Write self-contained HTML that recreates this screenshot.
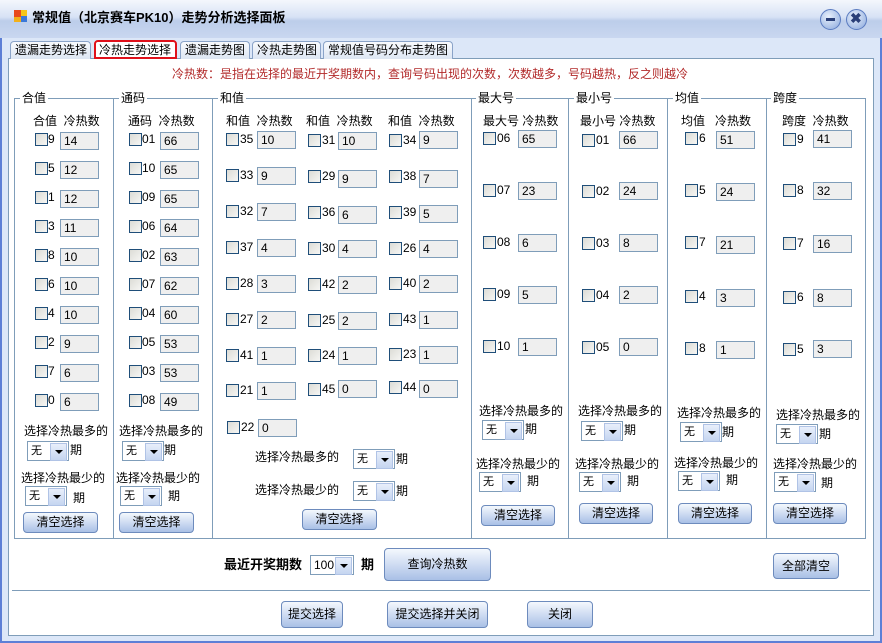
<!DOCTYPE html>
<html><head><meta charset="utf-8"><style>
*{margin:0;padding:0;box-sizing:border-box}
body{width:882px;height:643px;overflow:hidden;background:#dbe6f7;font-family:"Liberation Sans","Noto Sans CJK SC","WenQuanYi Zen Hei",sans-serif;font-size:12px;color:#000;position:relative}
.a{position:absolute;white-space:nowrap;line-height:14px}
.win{position:absolute;left:0;top:0;width:882px;height:643px;border:2px solid #5d7fd6;border-top:none;background:#dce7f8}
.title{position:absolute;left:0;top:0;width:882px;height:38px;background:linear-gradient(#f4f7fc,#d7e2f5 45%,#bccdea 55%,#c9d7f0)}
.panel{position:absolute;left:8px;top:58px;width:866px;height:578px;background:#fff;border:1px solid #7f9db9}
.tab{position:absolute;top:41px;height:18px;border:1px solid #8aa3c8;border-bottom:none;border-radius:4px 4px 0 0;background:linear-gradient(#f8fafd,#dde6f3);font-size:12px;line-height:16px;padding-left:4px;white-space:nowrap;overflow:hidden}
.cb{position:absolute;width:13px;height:13px;border:1px solid #1f4e79;background:linear-gradient(135deg,#dcdcd6,#f6f6f4)}
.in{position:absolute;width:39px;height:18px;border:1px solid #7f9db9;background:#efefef;padding-left:3px;line-height:16px}
.g{position:absolute;top:98px;height:441px;border:1px solid #7f9db9}
.gl{position:absolute;top:91px;background:#fff;padding:0 2px;font-size:12px;line-height:14px}
.sel{position:absolute;width:42px;height:20px;border:1px solid #7f9db9;background:#fff;font-size:11px;line-height:18px;padding-left:3px}
.sel::after{content:"";position:absolute;right:1px;top:1px;width:15px;height:16px;background:linear-gradient(#e8effb,#c5d5f0);border:1px solid #b0c3e6}
.sel::before{content:"";position:absolute;right:5px;top:8px;border:4px solid transparent;border-top:4px solid #000;border-bottom:none;z-index:1}
.btn{position:absolute;height:21px;border:1px solid #6d8bbd;border-radius:4px;background:linear-gradient(#f4f8fd,#cfdcf2 50%,#a9c0e6);text-align:center;font-size:12px;line-height:19px;white-space:nowrap}
</style></head><body>
<div class="win"></div>
<div class="title"></div>
<div class="a" style="left:14px;top:10px;width:7px;height:7px;background:#e84a1c"></div>
<div class="a" style="left:21px;top:10px;width:6px;height:6px;background:#f5c518"></div>
<div class="a" style="left:14px;top:17px;width:7px;height:5px;background:#f2b01a"></div>
<div class="a" style="left:21px;top:16px;width:6px;height:6px;background:#3a78d8"></div>
<div class="a" style="left:32px;top:11px;font-size:13px;font-weight:bold">常规值（北京赛车PK10）走势分析选择面板</div>
<div class="a" style="left:820px;top:9px;width:21px;height:21px;border-radius:50%;background:radial-gradient(circle at 40% 35%,#e8f0fc,#8aa8dc);border:1px solid #5a7bc0"></div>
<div class="a" style="left:826px;top:18px;width:9px;height:3px;background:#2a3f78"></div>
<div class="a" style="left:846px;top:9px;width:21px;height:21px;border-radius:50%;background:radial-gradient(circle at 40% 35%,#e8f0fc,#8aa8dc);border:1px solid #5a7bc0"></div>
<div class="a" style="left:850px;top:11px;font-size:14px;font-weight:bold;color:#2a3f78">✖</div>

<div class="panel"></div>
<div class="tab" style="left:10px;width:81px">遗漏走势选择</div>
<div class="tab" style="left:94px;width:83px;border:2px solid #e0101a;background:#fff;top:40px;height:19px;padding-left:3px">冷热走势选择</div>
<div class="tab" style="left:180px;width:70px">遗漏走势图</div>
<div class="tab" style="left:252px;width:69px">冷热走势图</div>
<div class="tab" style="left:323px;width:130px">常规值号码分布走势图</div>

<div class="a" style="left:172px;top:67px;color:#b22a2a">冷热数：是指在选择的最近开奖期数内，查询号码出现的次数，次数越多，号码越热，反之则越冷</div>

<div class="g" style="left:14px;width:100px"></div>
<div class="g" style="left:113px;width:100px"></div>
<div class="g" style="left:212px;width:260px"></div>
<div class="g" style="left:471px;width:98px"></div>
<div class="g" style="left:568px;width:100px"></div>
<div class="g" style="left:667px;width:100px"></div>
<div class="g" style="left:766px;width:100px"></div>
<div class="gl" style="left:20px">合值</div>
<div class="gl" style="left:119px">通码</div>
<div class="gl" style="left:218px">和值</div>
<div class="gl" style="left:476px">最大号</div>
<div class="gl" style="left:574px">最小号</div>
<div class="gl" style="left:673px">均值</div>
<div class="gl" style="left:771px">跨度</div>

<!-- headers -->
<div class="a" style="left:33px;top:114px">合值&nbsp; 冷热数</div>
<div class="a" style="left:128px;top:114px">通码&nbsp; 冷热数</div>
<div class="a" style="left:226px;top:114px">和值&nbsp; 冷热数</div>
<div class="a" style="left:306px;top:114px">和值&nbsp; 冷热数</div>
<div class="a" style="left:388px;top:114px">和值&nbsp; 冷热数</div>
<div class="a" style="left:483px;top:114px">最大号 冷热数</div>
<div class="a" style="left:580px;top:114px">最小号 冷热数</div>
<div class="a" style="left:681px;top:114px">均值&nbsp;&nbsp; 冷热数</div>
<div class="a" style="left:782px;top:114px">跨度&nbsp; 冷热数</div>

<!-- 合值 -->
<div class="cb" style="left:35px;top:133px"></div><div class="a" style="left:48px;top:132px">9</div><div class="in" style="left:60px;top:132px">14</div>
<div class="cb" style="left:35px;top:162px"></div><div class="a" style="left:48px;top:161px">5</div><div class="in" style="left:60px;top:161px">12</div>
<div class="cb" style="left:35px;top:191px"></div><div class="a" style="left:48px;top:190px">1</div><div class="in" style="left:60px;top:190px">12</div>
<div class="cb" style="left:35px;top:220px"></div><div class="a" style="left:48px;top:219px">3</div><div class="in" style="left:60px;top:219px">11</div>
<div class="cb" style="left:35px;top:249px"></div><div class="a" style="left:48px;top:248px">8</div><div class="in" style="left:60px;top:248px">10</div>
<div class="cb" style="left:35px;top:278px"></div><div class="a" style="left:48px;top:277px">6</div><div class="in" style="left:60px;top:277px">10</div>
<div class="cb" style="left:35px;top:307px"></div><div class="a" style="left:48px;top:306px">4</div><div class="in" style="left:60px;top:306px">10</div>
<div class="cb" style="left:35px;top:336px"></div><div class="a" style="left:48px;top:335px">2</div><div class="in" style="left:60px;top:335px">9</div>
<div class="cb" style="left:35px;top:365px"></div><div class="a" style="left:48px;top:364px">7</div><div class="in" style="left:60px;top:364px">6</div>
<div class="cb" style="left:35px;top:394px"></div><div class="a" style="left:48px;top:393px">0</div><div class="in" style="left:60px;top:393px">6</div>
<!-- 通码 -->
<div class="cb" style="left:129px;top:133px"></div><div class="a" style="left:142px;top:132px">01</div><div class="in" style="left:160px;top:132px">66</div>
<div class="cb" style="left:129px;top:162px"></div><div class="a" style="left:142px;top:161px">10</div><div class="in" style="left:160px;top:161px">65</div>
<div class="cb" style="left:129px;top:191px"></div><div class="a" style="left:142px;top:190px">09</div><div class="in" style="left:160px;top:190px">65</div>
<div class="cb" style="left:129px;top:220px"></div><div class="a" style="left:142px;top:219px">06</div><div class="in" style="left:160px;top:219px">64</div>
<div class="cb" style="left:129px;top:249px"></div><div class="a" style="left:142px;top:248px">02</div><div class="in" style="left:160px;top:248px">63</div>
<div class="cb" style="left:129px;top:278px"></div><div class="a" style="left:142px;top:277px">07</div><div class="in" style="left:160px;top:277px">62</div>
<div class="cb" style="left:129px;top:307px"></div><div class="a" style="left:142px;top:306px">04</div><div class="in" style="left:160px;top:306px">60</div>
<div class="cb" style="left:129px;top:336px"></div><div class="a" style="left:142px;top:335px">05</div><div class="in" style="left:160px;top:335px">53</div>
<div class="cb" style="left:129px;top:365px"></div><div class="a" style="left:142px;top:364px">03</div><div class="in" style="left:160px;top:364px">53</div>
<div class="cb" style="left:129px;top:394px"></div><div class="a" style="left:142px;top:393px">08</div><div class="in" style="left:160px;top:393px">49</div>
<!-- 和值 col1 -->
<div class="cb" style="left:226px;top:133px"></div><div class="a" style="left:240px;top:132px">35</div><div class="in" style="left:257px;top:131px">10</div>
<div class="cb" style="left:226px;top:169px"></div><div class="a" style="left:240px;top:168px">33</div><div class="in" style="left:257px;top:167px">9</div>
<div class="cb" style="left:226px;top:205px"></div><div class="a" style="left:240px;top:204px">32</div><div class="in" style="left:257px;top:203px">7</div>
<div class="cb" style="left:226px;top:241px"></div><div class="a" style="left:240px;top:240px">37</div><div class="in" style="left:257px;top:239px">4</div>
<div class="cb" style="left:226px;top:277px"></div><div class="a" style="left:240px;top:276px">28</div><div class="in" style="left:257px;top:275px">3</div>
<div class="cb" style="left:226px;top:313px"></div><div class="a" style="left:240px;top:312px">27</div><div class="in" style="left:257px;top:311px">2</div>
<div class="cb" style="left:226px;top:349px"></div><div class="a" style="left:240px;top:348px">41</div><div class="in" style="left:257px;top:347px">1</div>
<div class="cb" style="left:226px;top:384px"></div><div class="a" style="left:240px;top:383px">21</div><div class="in" style="left:257px;top:382px">1</div>
<div class="cb" style="left:227px;top:421px"></div><div class="a" style="left:241px;top:420px">22</div><div class="in" style="left:258px;top:419px">0</div>
<!-- col2 -->
<div class="cb" style="left:308px;top:134px"></div><div class="a" style="left:322px;top:133px">31</div><div class="in" style="left:338px;top:132px">10</div>
<div class="cb" style="left:308px;top:170px"></div><div class="a" style="left:322px;top:169px">29</div><div class="in" style="left:338px;top:170px">9</div>
<div class="cb" style="left:308px;top:206px"></div><div class="a" style="left:322px;top:205px">36</div><div class="in" style="left:338px;top:206px">6</div>
<div class="cb" style="left:308px;top:242px"></div><div class="a" style="left:322px;top:241px">30</div><div class="in" style="left:338px;top:240px">4</div>
<div class="cb" style="left:308px;top:278px"></div><div class="a" style="left:322px;top:277px">42</div><div class="in" style="left:338px;top:276px">2</div>
<div class="cb" style="left:308px;top:314px"></div><div class="a" style="left:322px;top:313px">25</div><div class="in" style="left:338px;top:312px">2</div>
<div class="cb" style="left:308px;top:349px"></div><div class="a" style="left:322px;top:348px">24</div><div class="in" style="left:338px;top:347px">1</div>
<div class="cb" style="left:308px;top:383px"></div><div class="a" style="left:322px;top:382px">45</div><div class="in" style="left:338px;top:380px">0</div>
<!-- col3 -->
<div class="cb" style="left:389px;top:134px"></div><div class="a" style="left:403px;top:133px">34</div><div class="in" style="left:419px;top:131px">9</div>
<div class="cb" style="left:389px;top:170px"></div><div class="a" style="left:403px;top:169px">38</div><div class="in" style="left:419px;top:170px">7</div>
<div class="cb" style="left:389px;top:206px"></div><div class="a" style="left:403px;top:205px">39</div><div class="in" style="left:419px;top:205px">5</div>
<div class="cb" style="left:389px;top:242px"></div><div class="a" style="left:403px;top:241px">26</div><div class="in" style="left:419px;top:240px">4</div>
<div class="cb" style="left:389px;top:277px"></div><div class="a" style="left:403px;top:276px">40</div><div class="in" style="left:419px;top:275px">2</div>
<div class="cb" style="left:389px;top:313px"></div><div class="a" style="left:403px;top:312px">43</div><div class="in" style="left:419px;top:311px">1</div>
<div class="cb" style="left:389px;top:348px"></div><div class="a" style="left:403px;top:347px">23</div><div class="in" style="left:419px;top:346px">1</div>
<div class="cb" style="left:389px;top:381px"></div><div class="a" style="left:403px;top:380px">44</div><div class="in" style="left:419px;top:380px">0</div>
<!-- 最大号 -->
<div class="cb" style="left:483px;top:132px"></div><div class="a" style="left:497px;top:131px">06</div><div class="in" style="left:518px;top:130px">65</div>
<div class="cb" style="left:483px;top:184px"></div><div class="a" style="left:497px;top:183px">07</div><div class="in" style="left:518px;top:182px">23</div>
<div class="cb" style="left:483px;top:236px"></div><div class="a" style="left:497px;top:235px">08</div><div class="in" style="left:518px;top:234px">6</div>
<div class="cb" style="left:483px;top:288px"></div><div class="a" style="left:497px;top:287px">09</div><div class="in" style="left:518px;top:286px">5</div>
<div class="cb" style="left:483px;top:340px"></div><div class="a" style="left:497px;top:339px">10</div><div class="in" style="left:518px;top:338px">1</div>
<!-- 最小号 -->
<div class="cb" style="left:582px;top:134px"></div><div class="a" style="left:596px;top:133px">01</div><div class="in" style="left:619px;top:131px">66</div>
<div class="cb" style="left:582px;top:185px"></div><div class="a" style="left:596px;top:184px">02</div><div class="in" style="left:619px;top:182px">24</div>
<div class="cb" style="left:582px;top:237px"></div><div class="a" style="left:596px;top:236px">03</div><div class="in" style="left:619px;top:234px">8</div>
<div class="cb" style="left:582px;top:289px"></div><div class="a" style="left:596px;top:288px">04</div><div class="in" style="left:619px;top:286px">2</div>
<div class="cb" style="left:582px;top:341px"></div><div class="a" style="left:596px;top:340px">05</div><div class="in" style="left:619px;top:338px">0</div>
<!-- 均值 -->
<div class="cb" style="left:685px;top:132px"></div><div class="a" style="left:699px;top:131px">6</div><div class="in" style="left:716px;top:131px">51</div>
<div class="cb" style="left:685px;top:184px"></div><div class="a" style="left:699px;top:183px">5</div><div class="in" style="left:716px;top:183px">24</div>
<div class="cb" style="left:685px;top:236px"></div><div class="a" style="left:699px;top:235px">7</div><div class="in" style="left:716px;top:236px">21</div>
<div class="cb" style="left:685px;top:290px"></div><div class="a" style="left:699px;top:289px">4</div><div class="in" style="left:716px;top:289px">3</div>
<div class="cb" style="left:685px;top:342px"></div><div class="a" style="left:699px;top:341px">8</div><div class="in" style="left:716px;top:341px">1</div>
<!-- 跨度 -->
<div class="cb" style="left:783px;top:133px"></div><div class="a" style="left:797px;top:132px">9</div><div class="in" style="left:813px;top:130px">41</div>
<div class="cb" style="left:783px;top:184px"></div><div class="a" style="left:797px;top:183px">8</div><div class="in" style="left:813px;top:182px">32</div>
<div class="cb" style="left:783px;top:237px"></div><div class="a" style="left:797px;top:236px">7</div><div class="in" style="left:813px;top:235px">16</div>
<div class="cb" style="left:783px;top:291px"></div><div class="a" style="left:797px;top:290px">6</div><div class="in" style="left:813px;top:289px">8</div>
<div class="cb" style="left:783px;top:343px"></div><div class="a" style="left:797px;top:342px">5</div><div class="in" style="left:813px;top:340px">3</div>

<!-- bottom controls -->
<div class="a" style="left:24px;top:424px">选择冷热最多的</div>
<div class="sel" style="left:27px;top:441px">无</div><div class="a" style="left:70px;top:443px">期</div>
<div class="a" style="left:21px;top:471px">选择冷热最少的</div>
<div class="sel" style="left:25px;top:486px">无</div><div class="a" style="left:73px;top:491px">期</div>
<div class="btn" style="left:23px;top:512px;width:75px">清空选择</div>

<div class="a" style="left:119px;top:424px">选择冷热最多的</div>
<div class="sel" style="left:122px;top:441px">无</div><div class="a" style="left:164px;top:443px">期</div>
<div class="a" style="left:116px;top:471px">选择冷热最少的</div>
<div class="sel" style="left:120px;top:486px">无</div><div class="a" style="left:168px;top:489px">期</div>
<div class="btn" style="left:119px;top:512px;width:75px">清空选择</div>

<div class="a" style="left:255px;top:450px">选择冷热最多的</div>
<div class="sel" style="left:353px;top:449px">无</div><div class="a" style="left:396px;top:452px">期</div>
<div class="a" style="left:255px;top:483px">选择冷热最少的</div>
<div class="sel" style="left:353px;top:481px">无</div><div class="a" style="left:396px;top:484px">期</div>
<div class="btn" style="left:302px;top:509px;width:75px">清空选择</div>

<div class="a" style="left:479px;top:404px">选择冷热最多的</div>
<div class="sel" style="left:482px;top:420px">无</div><div class="a" style="left:525px;top:422px">期</div>
<div class="a" style="left:476px;top:457px">选择冷热最少的</div>
<div class="sel" style="left:479px;top:472px">无</div><div class="a" style="left:527px;top:474px">期</div>
<div class="btn" style="left:481px;top:505px;width:74px">清空选择</div>

<div class="a" style="left:578px;top:404px">选择冷热最多的</div>
<div class="sel" style="left:581px;top:421px">无</div><div class="a" style="left:624px;top:423px">期</div>
<div class="a" style="left:575px;top:457px">选择冷热最少的</div>
<div class="sel" style="left:579px;top:472px">无</div><div class="a" style="left:627px;top:474px">期</div>
<div class="btn" style="left:579px;top:503px;width:74px">清空选择</div>

<div class="a" style="left:677px;top:406px">选择冷热最多的</div>
<div class="sel" style="left:680px;top:422px">无</div><div class="a" style="left:722px;top:425px">期</div>
<div class="a" style="left:674px;top:456px">选择冷热最少的</div>
<div class="sel" style="left:678px;top:471px">无</div><div class="a" style="left:726px;top:473px">期</div>
<div class="btn" style="left:678px;top:503px;width:74px">清空选择</div>

<div class="a" style="left:776px;top:408px">选择冷热最多的</div>
<div class="sel" style="left:776px;top:424px">无</div><div class="a" style="left:819px;top:427px">期</div>
<div class="a" style="left:773px;top:457px">选择冷热最少的</div>
<div class="sel" style="left:774px;top:472px">无</div><div class="a" style="left:821px;top:476px">期</div>
<div class="btn" style="left:773px;top:503px;width:74px">清空选择</div>

<!-- bottom bar -->
<div class="a" style="left:224px;top:558px;font-size:13px;font-weight:bold">最近开奖期数</div>
<div class="sel" style="left:310px;top:555px;width:44px;font-size:12px">100</div>
<div class="a" style="left:361px;top:558px;font-size:13px;font-weight:bold">期</div>
<div class="btn" style="left:384px;top:548px;width:107px;height:33px;line-height:31px">查询冷热数</div>
<div class="btn" style="left:773px;top:553px;width:66px;height:26px;line-height:24px">全部清空</div>
<div class="a" style="left:12px;top:590px;width:858px;height:1px;background:#7f9db9"></div>
<div class="btn" style="left:281px;top:601px;width:62px;height:27px;line-height:25px">提交选择</div>
<div class="btn" style="left:387px;top:601px;width:101px;height:27px;line-height:25px">提交选择并关闭</div>
<div class="btn" style="left:527px;top:601px;width:66px;height:27px;line-height:25px">关闭</div>
</body></html>
